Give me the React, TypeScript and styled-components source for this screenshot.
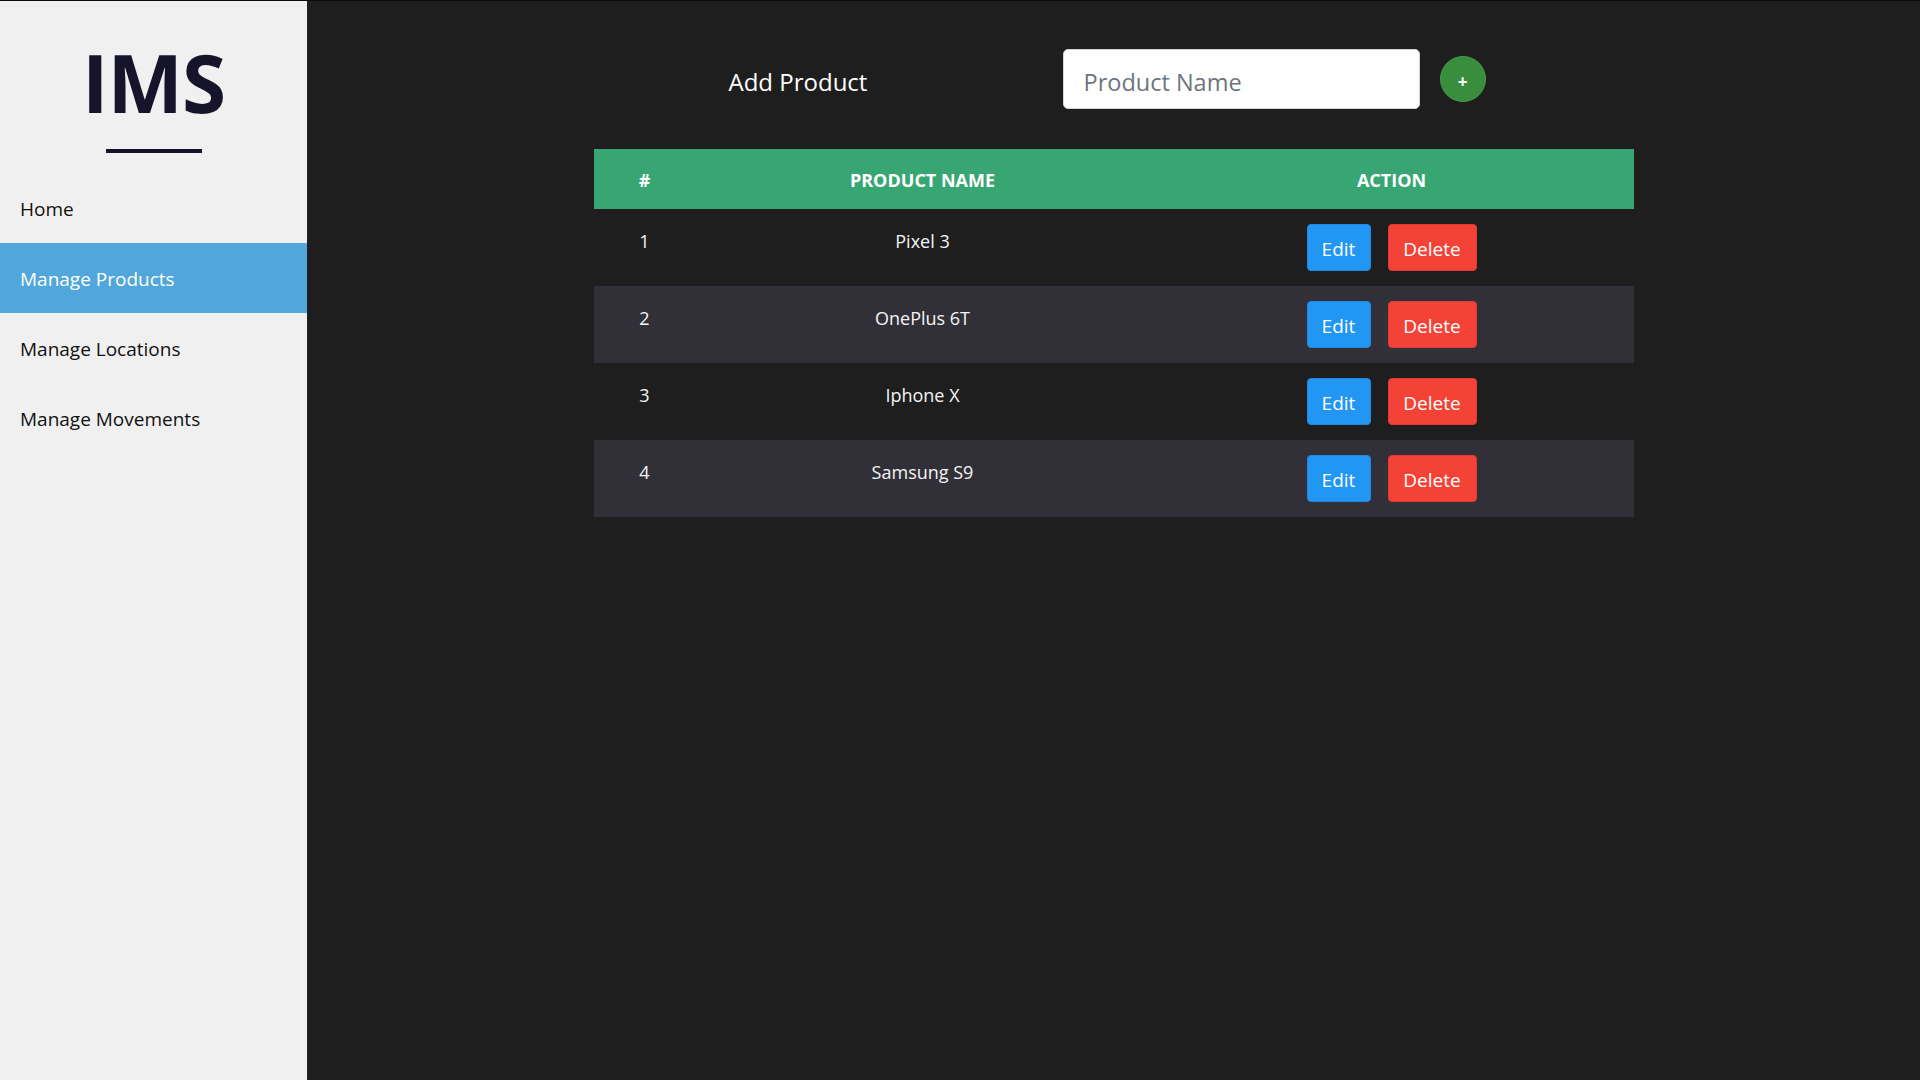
import React from "react";
import styled, { createGlobalStyle } from "styled-components";

const GlobalStyle = createGlobalStyle`
  html, body {
    margin: 0;
    padding: 0;
    background: #1e1e1e;
  }
  body {
    font-family: "Open Sans", "Noto Sans", sans-serif;
  }
  * { box-sizing: border-box; }
`;

const Page = styled.div`
  display: flex;
  min-height: 1080px;
  border-top: 1px solid #0a0a0a;
  background: #1e1e1e;
`;

const Sidebar = styled.aside`
  width: 307px;
  flex-shrink: 0;
  background: #f0f0f0;
  display: flex;
  flex-direction: column;
`;

const Brand = styled.div`
  display: flex;
  flex-direction: column;
  align-items: center;
  padding-top: 31px;
`;

const Logo = styled.h1`
  margin: 0;
  font-size: 80px;
  line-height: 100px;
  font-weight: 700;
  color: #16142a;
  letter-spacing: -1px;
`;

const Underline = styled.div`
  width: 96px;
  height: 4px;
  background: #16142a;
  margin-top: 17px;
  margin-bottom: 20px;
`;

const Nav = styled.nav`
  display: flex;
  flex-direction: column;
`;

const NavItem = styled.a<{ $active?: boolean }>`
  display: flex;
  align-items: center;
  height: 70px;
  padding-left: 20px;
  padding-top: 2px;
  font-size: 19px;
  color: ${(p) => (p.$active ? "#ffffff" : "#111111")};
  background: ${(p) => (p.$active ? "#51a7dc" : "transparent")};
  text-decoration: none;
  cursor: pointer;
`;

const Main = styled.main`
  flex: 1;
  display: flex;
  justify-content: center;
`;

const Content = styled.div`
  width: 1040px;
  padding-top: 48px;
`;

const AddRow = styled.div`
  display: flex;
  align-items: center;
  height: 60px;
  padding-left: 135px;
  margin-bottom: 40px;
`;

const AddLabel = styled.div`
  width: 334px;
  padding-top: 5px;
  font-size: 24px;
  color: #ffffff;
`;

const NameInput = styled.input`
  width: 357px;
  height: 60px;
  border: 1px solid #ced4da;
  border-radius: 5px;
  padding: 5px 20px 0;
  font-family: "Open Sans", "Noto Sans", sans-serif;
  font-size: 23.5px;
  color: #495057;
  background: #ffffff;
  outline: none;
  &::placeholder {
    color: #6c757d;
  }
`;

const PlusButton = styled.button`
  width: 46px;
  height: 46px;
  margin-left: 20px;
  border-radius: 50%;
  border: 1px solid #43a047;
  background: #388e3c;
  color: #ffffff;
  font-family: "Open Sans", "Noto Sans", sans-serif;
  font-weight: 700;
  font-size: 17px;
  line-height: 1;
  display: flex;
  align-items: center;
  justify-content: center;
  padding: 4px 0 0 0;
  cursor: pointer;
`;

const Table = styled.table`
  width: 1040px;
  border-collapse: collapse;
  color: #f5f5f5;
`;

const HeadCell = styled.th<{ $w: number }>`
  width: ${(p) => p.$w}px;
  height: 60px;
  background: #38a673;
  color: #ffffff;
  font-size: 18px;
  font-weight: 700;
  text-align: center;
  vertical-align: middle;
  padding: 2px 0 0;
`;

const Row = styled.tr<{ $striped?: boolean }>`
  background: ${(p) => (p.$striped ? "#313038" : "#1e1e1e")};
`;

const Cell = styled.td`
  height: 77px;
  text-align: center;
  vertical-align: top;
  font-size: 18px;
  padding: 19px 0 0;
  line-height: 27px;
`;

const ActionCell = styled.td`
  height: 77px;
  text-align: center;
  vertical-align: top;
  padding: 15px 0 0;
`;

const Actions = styled.div`
  display: inline-flex;
  gap: 17px;
`;

const ActionButton = styled.button<{ $variant: "edit" | "delete" }>`
  height: 47px;
  padding: 3px 13px 0;
  min-width: ${(p) => (p.$variant === "edit" ? "64px" : "89px")};
  border-radius: 4px;
  border: 1px solid ${(p) => (p.$variant === "edit" ? "#1e88e5" : "#e53935")};
  background: ${(p) => (p.$variant === "edit" ? "#2196f3" : "#f44336")};
  color: #ffffff;
  font-family: "Open Sans", "Noto Sans", sans-serif;
  font-size: 19px;
  cursor: pointer;
`;

const products = [
  { id: 1, name: "Pixel 3" },
  { id: 2, name: "OnePlus 6T" },
  { id: 3, name: "Iphone X" },
  { id: 4, name: "Samsung S9" },
];

export default function App() {
  return (
    <>
      <GlobalStyle />
      <Page>
        <Sidebar>
          <Brand>
            <Logo>IMS</Logo>
            <Underline />
          </Brand>
          <Nav>
            <NavItem>Home</NavItem>
            <NavItem $active>Manage Products</NavItem>
            <NavItem>Manage Locations</NavItem>
            <NavItem>Manage Movements</NavItem>
          </Nav>
        </Sidebar>
        <Main>
          <Content>
            <AddRow>
              <AddLabel>Add Product</AddLabel>
              <NameInput placeholder="Product Name" />
              <PlusButton>+</PlusButton>
            </AddRow>
            <Table>
              <thead>
                <tr>
                  <HeadCell $w={102}>#</HeadCell>
                  <HeadCell $w={454}>PRODUCT NAME</HeadCell>
                  <HeadCell $w={484}>ACTION</HeadCell>
                </tr>
              </thead>
              <tbody>
                {products.map((p, i) => (
                  <Row key={p.id} $striped={i % 2 === 1}>
                    <Cell>{p.id}</Cell>
                    <Cell>{p.name}</Cell>
                    <ActionCell>
                      <Actions>
                        <ActionButton $variant="edit">Edit</ActionButton>
                        <ActionButton $variant="delete">Delete</ActionButton>
                      </Actions>
                    </ActionCell>
                  </Row>
                ))}
              </tbody>
            </Table>
          </Content>
        </Main>
      </Page>
    </>
  );
}
